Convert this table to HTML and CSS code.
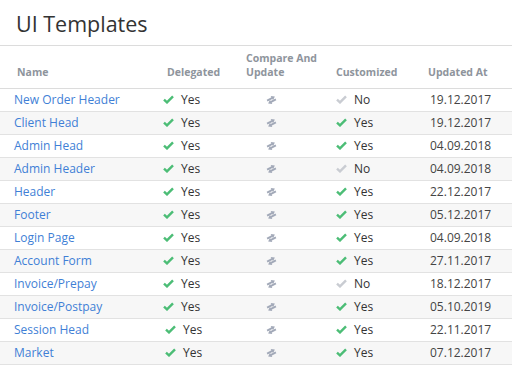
FILE: index.html
```html
<html lang="en">
<head>
    <meta charset="UTF-8">
    <title>UI Templates</title>
    <link rel="stylesheet" href="styles.css">
</head>
<body>
    <header class="page-head">
        <h1>UI Templates</h1>
    </header>

    <table class="grid">
        <colgroup>
            <col class="c-name">
            <col class="c-deleg">
            <col class="c-cmp">
            <col class="c-cust">
            <col class="c-date">
        </colgroup>
        <thead>
            <tr>
                <th class="h-name">Name</th>
                <th class="h-deleg">Delegated</th>
                <th class="h-cmp">Compare And<br>Update</th>
                <th class="h-cust">Customized</th>
                <th class="h-date">Updated At</th>
            </tr>
        </thead>
        <tbody id="rows"></tbody>
    </table>

<script>
var rows = [
    ["New Order Header", 1, 0, "19.12.2017"],
    ["Client Head", 1, 1, "19.12.2017"],
    ["Admin Head", 1, 1, "04.09.2018"],
    ["Admin Header", 1, 0, "04.09.2018"],
    ["Header", 1, 1, "22.12.2017"],
    ["Footer", 1, 1, "05.12.2017"],
    ["Login Page", 1, 1, "04.09.2018"],
    ["Account Form", 1, 1, "27.11.2017"],
    ["Invoice/Prepay", 1, 0, "18.12.2017"],
    ["Invoice/Postpay", 1, 1, "05.10.2019"],
    ["Session Head", 1, 1, "22.11.2017", "nudge"],
    ["Market", 1, 1, "07.12.2017", "nudge"]
];

var check = '<svg class="tick" width="11" height="9" viewBox="0 0 11 9"><path d="M1 4.6 L4 7.4 L10 1.4" fill="none" stroke="currentColor" stroke-width="2.4"/></svg>';
// "exchange" glyph: two opposite arrows, tilted up to the right
var swap = '<svg class="swap" width="11" height="10" viewBox="-0.5 0 11 10"><g transform="rotate(-28 5 5)">' +
    '<path d="M0.8 3.5 H6.8 M3.2 6.5 H9.2" fill="none" stroke="currentColor" stroke-width="1.8"/>' +
    '<path d="M6.2 1 L9.6 3.5 L6.2 6 Z M3.8 4 L0.4 6.5 L3.8 9 Z" fill="currentColor"/>' +
    '</g></svg>';

function flag(on) {
    return '<span class="flag ' + (on ? "yes" : "no") + '">' + check + (on ? "Yes" : "No") + '</span>';
}

var html = "";
for (var i = 0; i < rows.length; i++) {
    var r = rows[i];
    html += '<tr' + (r[4] ? ' class="' + r[4] + '"' : '') + '>' +
        '<td class="d-name"><a href="#">' + r[0] + '</a></td>' +
        '<td class="d-deleg">' + flag(r[1]) + '</td>' +
        '<td class="d-cmp">' + swap + '</td>' +
        '<td class="d-cust">' + flag(r[2]) + '</td>' +
        '<td class="d-date">' + r[3] + '</td>' +
        '</tr>';
}
document.getElementById("rows").innerHTML = html;
</script>
</body>
</html>
```

FILE: styles.css
```css
* {
    font-family: "Open Sans", "Liberation Sans", sans-serif;
}

body {
    margin: 0;
    background: #fff;
    color: #333;
}

.page-head {
    height: 45px;
    border-bottom: 1px solid #dcdcdc;
}

h1 {
    margin: 0;
    padding: 9px 0 0 16px;
    font-size: 21.5px;
    font-weight: 400;
    line-height: 30px;
    color: #333;
}

.grid {
    width: 100%;
    border-collapse: collapse;
    table-layout: fixed;
    font-size: 12px;
}

.c-name { width: 160px; }
.c-deleg { width: 80px; }
.c-cmp { width: 90px; }
.c-cust { width: 90px; }

th {
    height: 42px;
    padding: 0;
    text-align: left;
    vertical-align: bottom;
    padding-bottom: 9px;
    font-size: 10.5px;
    font-weight: 700;
    line-height: 14px;
    color: #8e949c;
    border-bottom: 1px solid #dcdcdc;
}

.h-name { padding-left: 17px; }
.h-deleg { padding-left: 7px; }
.h-cmp { padding-left: 6px; }
.h-cust { padding-left: 6px; }
.h-date { padding-left: 8px; }

td {
    height: 22px;
    padding: 0;
    line-height: 22px;
    border-bottom: 1px solid #e2e2e2;
    white-space: nowrap;
}

tbody tr:nth-child(even) {
    background: #f7f7f7;
}

a {
    color: #3f7fd6;
    text-decoration: none;
}

.d-name { padding-left: 14px; }
.d-deleg { padding-left: 3px; }
.d-cmp { padding-left: 26px; }
.d-cust { padding-left: 6px; }
.d-date { padding-left: 10px; color: #444; }

.nudge .d-deleg { padding-left: 5px; }

.flag {
    display: inline-flex;
    align-items: center;
    color: #333;
}

.tick {
    margin-right: 7px;
}

.yes .tick { color: #4cbd76; }
.no .tick { color: #c9ccd2; }

.swap {
    color: #a2a9b8;
    vertical-align: -1px;
}
```
